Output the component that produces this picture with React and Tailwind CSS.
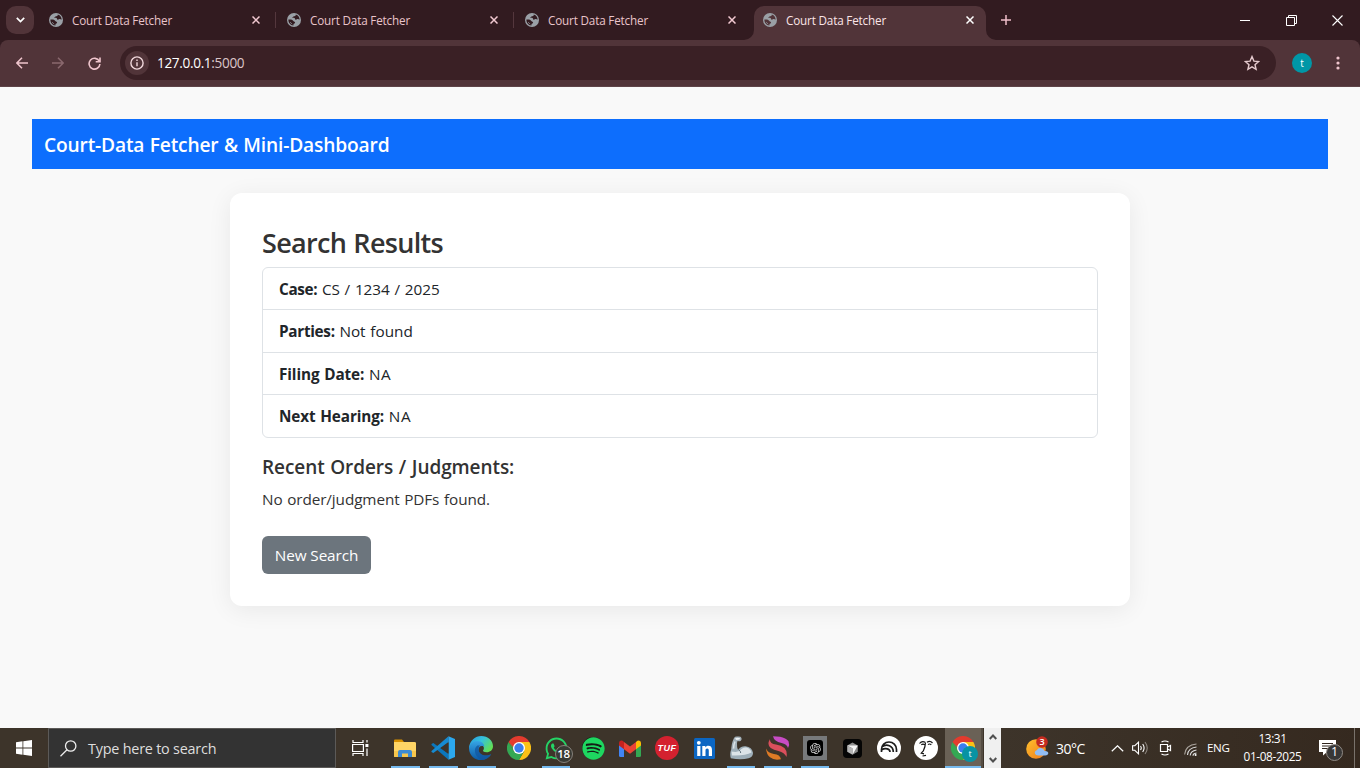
import React from "react";
import { FaWhatsapp, FaSpotify } from "react-icons/fa";
import { RiOpenaiFill } from "react-icons/ri";

const Globe = ({ land = "#321b20" }) => (
  <svg width="14" height="14" viewBox="0 0 14 14" className="shrink-0">
    <circle cx="7" cy="7" r="7" fill="#9aa0a6" />
    <path d="M8.800 1.500C9 3 7.500 3.300 6.400 3.400c-.5.900-1.300.9-1.300 1.500 1.600-.2 2.900 0 3.100 1.300.1.900 1.200.5 1.700.1.800-.5 1.800-.2 2.700.5a5.600 5.600 0 0 0-3.800-5.300z" fill={land} />
    <path d="M1.400 6.600c1.700-.2 3.900-.3 4.700 1.200.3.900 1.800.6 2 1.800-.1 1.200-1.300 1-1.600 1.700-.1.600 0 1-.1 1.300C3.300 12.300 1.300 9.800 1.400 6.600z" fill={land} />
    <path d="M3 9.600c1.200-.3 1.300 1.100 2.200 1.500" stroke="#9aa0a6" strokeWidth=".8" fill="none" />
  </svg>
);

const Close = ({ c = "#f2c9d1" }) => (
  <svg width="8" height="8" viewBox="0 0 8 8" fill="none" stroke={c} strokeWidth="1.500">
    <path d="M.5.5l7 7M7.500.5l-7 7" />
  </svg>
);

const Tab = ({ sep }) => (
  <div className="flex h-[28px] w-[238px] shrink-0 items-center pl-[9px]">
    <Globe />
    <span className="ml-[9px] w-[180px] whitespace-nowrap pt-[2px] text-[#e9c4cb]">Court Data Fetcher</span>
    <Close />
    <span className={sep ? "ml-[15px] h-4 w-px bg-[#54373d]" : "ml-[15px] w-px"} />
  </div>
);

const Chrome = () => (
  <svg width="24" height="24" viewBox="0 0 24 24">
    <path d="M12 6h10.400A12 12 0 0 1 12 24l5.200-9z" fill="#fbc116" />
    <path d="M1.600 6A12 12 0 0 0 12 24l5.200-9H6.800z" fill="#34a853" />
    <path d="M1.600 6A12 12 0 0 1 22.400 6H12L6.800 15z" fill="#e33b2e" />
    <path d="M1.600 6l5.200 9L12 18z" fill="#34a853" />
    <circle cx="12" cy="12" r="6" fill="#fff" />
    <circle cx="12" cy="12" r="4.700" fill="#3b7ded" />
  </svg>
);

const Explorer = () => (
  <svg width="22" height="20" viewBox="0 0 22 20">
    <path d="M0 2.500Q0 1.500 1 1.500h7l2 2.500H0z" fill="#d99100" />
    <path d="M0 4h20.500q1.500 0 1.500 1v13q0 1-1 1H1q-1 0-1-1z" fill="#ffd566" />
    <path d="M0 13h22v5q0 1-1 1H1q-1 0-1-1z" fill="#f6c64d" />
    <path d="M4 19v-5q0-2 2-2h10q2 0 2 2v5h-4v-3.500H8V19z" fill="#3c8bd3" />
  </svg>
);

const VSCode = () => (
  <svg width="24" height="24" viewBox="0 0 24 24">
    <path d="M.5 8 2.300 7 17.500 18v5.800L.5 9z" fill="#0b77bd" />
    <path d="M.5 16 2.300 17 17.500 6V.2L.5 15z" fill="#168bd2" />
    <path d="M17.500.2 24 3.100v17.800l-6.500 2.900z" fill="#2ca8ee" />
    <path d="M17.500 6.500v11L10.200 12z" fill="#3d342a" />
  </svg>
);

const Edge = () => (
  <svg width="24" height="24" viewBox="0 0 24 24">
    <defs>
      <linearGradient id="ea" x1="0" y1="0" x2="1" y2=".6">
        <stop offset="0" stopColor="#2999df" /><stop offset=".5" stopColor="#35c1dc" /><stop offset="1" stopColor="#62df55" />
      </linearGradient>
      <linearGradient id="eb" x1="0" y1="0" x2="0" y2="1">
        <stop offset="0" stopColor="#36a5e5" /><stop offset="1" stopColor="#0c59a4" />
      </linearGradient>
    </defs>
    <path d="M.2 10.500C1.400 4.200 6.200 0 12.200 0 19 0 24 4.600 24 10.300c0 3.800-3 6-6.400 6-3 0-4-1-3.500-1.700 1.600-2 1.200-5.600-3.300-5.800C5.500 8.500.4 9 .2 14z" fill="url(#ea)" />
    <path d="M.1 11.500C1 7 4.600 4.800 8.500 4.900c4.200.1 6.800 2.900 6.800 5.500-5-1.700-6 2.100-5.600 4.300.9 4.300 7 6.500 12.500 3.500C20 22 16.200 24 12 24 5 24-.4 18.500.1 11.500z" fill="url(#eb)" />
    <path d="M8.400 9.400c-4.700 3.100-2.600 12 4.600 14.500 4-.2 7.300-2.300 9.200-5.700-5.500 3-12.100.8-12.600-4.500-.2-2.200.600-3.600 1.600-4.200z" fill="#1056a0" opacity=".75" />
  </svg>
);

const Gmail = () => (
  <svg width="22" height="17" viewBox="0 0 22 17">
    <path d="M0 3h5v14H1.500Q0 17 0 15.500z" fill="#4285f4" />
    <path d="M17 3h5v12.500q0 1.500-1.500 1.500H17z" fill="#34a853" />
    <path d="M17 2q2-2 3.500-1.300Q22 1.200 22 3v2.500l-5 3.800z" fill="#fbbc04" />
    <path d="M5 2Q3 0 1.500.7 0 1.200 0 3v2.500l5 3.800z" fill="#c5221f" />
    <path d="m5 2 6 4.500L17 2v7.300l-6 4.500-6-4.500z" fill="#ea4335" />
  </svg>
);

const Tuf = () => (
  <span className="flex h-6 w-6 items-center justify-center rounded-full bg-[#d4212f] pt-px font-['Liberation_Sans',sans-serif] text-[9px] font-bold italic tracking-[0.5px] text-white">TUF</span>
);

const LinkedIn = () => (
  <svg width="21" height="21" viewBox="0 0 21 21">
    <rect width="21" height="21" rx="1.500" fill="#0b66c3" />
    <circle cx="4.800" cy="4.800" r="1.900" fill="#fff" />
    <path d="M3.200 8h3.200v10H3.200zM8.300 8h3v1.400C12 8.300 13 7.800 14.300 7.800c2.600 0 3.700 1.500 3.700 4.300V18h-3.200v-5.300c0-1.400-.5-2.200-1.600-2.200-1.200 0-1.700.9-1.700 2.200V18H8.300z" fill="#fff" />
  </svg>
);

const Arm = () => (
  <svg width="24" height="24" viewBox="0 0 24 24">
    <path d="M5 2Q6 .3 8.500.6q3-.6 4 1.300.5 2-.9 3-1.300.6-3.100.2L8 7q-.2 4 .8 6.500l-2 3-4.500-1.500Q2 8 5 2z" fill="#a3b0b8" />
    <path d="M6 5.500Q4.500 9 4.500 13" stroke="#dce4e8" strokeWidth="1.500" fill="none" />
    <path d="M2 14Q4 11.500 6.500 13l3 .5q2.500-3.500 7-3.200 6.500.7 7.500 6.500.2 4-4.500 5.500Q12 24 1.800 22.300.5 18 2 14z" fill="#9eafb9" />
    <path d="M2.500 15.500 6.500 16l4-1Q13.500 10.800 17.500 11.500q4.300 1.300 5 5-6 3.500-19.500 3z" fill="#dce4e8" />
    <path d="M6 2.400Q8.500 1 11.200 2.300l-.8 1.300-3 .5z" fill="#eef2f4" />
    <path d="M9.500 13.500q2.300 1.500 2.200 3.500" stroke="#60717b" fill="none" />
  </svg>
);

const Swirl = () => (
  <svg width="24" height="24" viewBox="0 0 24 24">
    <path d="M7 .2Q11 .3 14 .8q6 1 8.500 4.500 1.500 3.500-.5 6.700-1-4-6.500-5Q8 5.500 7 .2z" fill="#c84cc5" />
    <path d="M4 3q-.5 4.500 6 5.500 12.500 2 10.500 12.500-2-4.500-8-6Q-1.500 12.500 4 3z" fill="#d94f5c" />
    <path d="M0 12.500q2 4.500 8 5.500 6 .5 7 5.300-7 1.500-11-2Q.5 18.500 0 12.500z" fill="#dd7a25" />
  </svg>
);

const Gpt = () => (
  <span className="flex h-6 w-6 items-center justify-center bg-[#77797b]">
    <span className="flex h-4 w-4 items-center justify-center rounded-[3px] bg-black text-[13px] text-[#d8d8d8]"><RiOpenaiFill /></span>
  </span>
);

const Cursor = () => (
  <svg width="19" height="19" viewBox="0 0 19 19">
    <rect width="19" height="19" rx="4" fill="#050505" />
    <path d="m9.500 3.500 5.300 3-5.300 2.800-5.300-2.800z" fill="#8f8f8f" />
    <path d="M4.200 6.500 9.500 9.300v6.500l-5.300-3z" fill="#b5b5b5" />
    <path d="M14.800 6.500 9.500 9.300v6.500l5.300-3z" fill="#858585" />
    <path d="M4.200 6.500h10.600L9.500 15.800V9.300z" fill="#f5f5f5" />
  </svg>
);

const Notebook = () => (
  <svg width="24" height="24" viewBox="0 0 24 24" fill="none" stroke="#1c1c1c" strokeWidth="1.700">
    <circle cx="12" cy="12" r="12" fill="#fff" stroke="none" />
    <path d="M4.500 16v-2.500a7.500 7.500 0 0 1 15 0V16M4.800 10.800c5-3.600 11.500-1 11.500 5.200M4.500 14c4-2.600 8.500-1 8.500 2" />
  </svg>
);

const Face = () => (
  <svg width="24" height="24" viewBox="0 0 24 24" fill="none" stroke="#151515" strokeWidth="1.200">
    <circle cx="12" cy="12" r="12" fill="#fff" stroke="none" />
    <path d="M5.500 7.500Q8 4.300 11.200 6.300M13 6.300q3-2.300 5.500.7M7.300 8.800q1.700-1.500 3.500 0M14 8.600q1.500-1.300 3.300.2M11.500 6.500q0 4-2.200 8.500l-2 2.200 2.700.6M8.500 20l3.500-.7" />
  </svg>
);

const Whats = () => (
  <span className="relative text-[25px] text-[#25d366]">
    <FaWhatsapp />
    <span className="absolute left-[11px] top-[9px] flex h-[18px] w-[18px] items-center justify-center rounded-full border border-[#85817b] bg-[#393a34] font-['Open_Sans'] text-[11.5px] font-semibold tracking-[-0.4px] text-white">18</span>
  </span>
);

const Spot = () => (
  <span className="flex h-[22px] w-[22px] items-center justify-center rounded-full bg-[#151b16] text-[23px] text-[#1ed760]"><FaSpotify className="shrink-0" /></span>
);

const apps = [
  [Explorer, 1, 1], [VSCode, 1, 1], [Edge, 1, 1], [Chrome, 0, 1],
  [Whats, 1, 0], [Spot, 0, 0], [Gmail, 0, 0], [Tuf, 0, 0], [LinkedIn, 0, 0], [Arm, 1, 0],
  [Swirl, 1, 0], [Gpt, 1, 0], [Cursor, 0, 0], [Notebook, 0, 0], [Face, 0, 0],
];

const TaskButton = ({ item: [Icon, open, wide] }) => (
  <div className={wide ? "flex h-10 w-[38px] flex-col items-center" : "flex h-10 w-[37px] flex-col items-center pr-px"}>
    <div className="flex h-[38px] items-center pt-[2px]"><Icon /></div>
    <div className={open ? (wide ? "h-[2px] w-[29px] bg-[#76b9ed]" : "h-[2px] w-[28px] bg-[#76b9ed]") : "h-[2px]"} />
  </div>
);

const Taskbar = () => (
  <footer className="flex h-10 items-center bg-[#3d342a] font-['Open_Sans',sans-serif] text-white">
    <div className="flex w-12 items-center justify-center">
      <svg width="16" height="16" viewBox="0 0 16 16" fill="#fff"><path d="M0 2.200 6.500 1.300v6.300H0zM7.300 1.200 16 0v7.600H7.300zM0 8.400h6.500v6.300L0 13.800zM7.300 8.400H16V16l-8.700-1.200z" /></svg>
    </div>
    <div className="flex h-10 w-[288px] items-center border border-[#5c5a58] bg-[#333333] pl-[11px]">
      <svg width="17" height="17" viewBox="0 0 17 17" fill="none" stroke="#eee" strokeWidth="1.300"><circle cx="10.700" cy="6" r="5.200" /><path d="M7 9.700.5 16.200" /></svg>
      <span className="ml-[11px] whitespace-nowrap pt-px text-[14.4px] tracking-[-0.22px] text-[#dedede]">Type here to search</span>
    </div>
    <div className="flex w-[50px] justify-end pr-[17px]">
      <svg width="17" height="16" viewBox="0 0 17 16" fill="none" stroke="#fff" strokeWidth="1.200"><path d="M1 0v2.500h10V0M1 16v-2.500h10V16M.6 4.500h10.800v7H.6zM15 0v2.500M15 8.500V16" /><path d="M13.400 4h3v3h-3z" fill="#fff" stroke="none" /></svg>
    </div>
    <div className="flex">
      {apps.map((a, i) => <TaskButton key={i} item={a} />)}
    </div>
    <div className="flex h-10 w-9 flex-col items-center bg-[#6a6156]">
      <div className="relative flex h-[38px] items-center pt-[2px]">
        <Chrome />
        <span className="absolute left-[11px] top-[18px] flex h-4 w-4 items-center justify-center rounded-full bg-[#0893a3] text-[9px]">t</span>
      </div>
      <div className="h-[2px] w-full bg-[#76b9ed]" />
    </div>
    <div className="h-10 w-[3px] border-r border-[#3d342a] bg-[#554d43]" />
    <div className="flex h-10 w-[17px] flex-col items-center justify-between bg-[#f0f0f0] pb-[5px] pt-[6px]">
      <svg width="8" height="6" viewBox="0 0 8 6" fill="none" stroke="#505050" strokeWidth="2"><path d="m.7 5 3.300-3.500L7.300 5" /></svg>
      <svg width="8" height="6" viewBox="0 0 8 6" fill="none" stroke="#505050" strokeWidth="2"><path d="M.7 1 4 4.500 7.300 1" /></svg>
    </div>
    <div className="flex h-10 flex-1 items-center bg-gradient-to-r from-[#3d342a] to-[#35291f] pl-[25px]">
      <svg width="23" height="24" viewBox="0 0 23 24" className="-mt-[1px] shrink-0">
        <defs><linearGradient id="sun" x2="1" y2="1"><stop stopColor="#ffc02c" /><stop offset="1" stopColor="#ef7c1c" /></linearGradient></defs>
        <circle cx="10" cy="13" r="9.800" fill="url(#sun)" />
        <path d="M10 19q-3-3 1-5 1-2.500 4-2 3 .3 3.500 3 4-.2 3.800 2.500-.5 2-3 2h-7z" fill="#91bdf4" />
        <circle cx="16" cy="6" r="5.800" fill="#c52b20" />
        <text x="16" y="9.200" textAnchor="middle" fill="#fff" fontSize="9" fontWeight="600">3</text>
      </svg>
      <span className="ml-[7px] w-[55px] whitespace-nowrap text-[14px] tracking-[-0.5px]">30°C</span>
      <svg width="13" height="7" viewBox="0 0 13 7" fill="none" stroke="#fff" strokeWidth="1.200" className="shrink-0"><path d="m.8 6.300 5.700-5.500 5.700 5.500" /></svg>
      <svg width="17" height="14" viewBox="0 0 17 14" fill="none" stroke="#fff" strokeWidth="1.100" className="ml-[8px] shrink-0"><path d="M.6 4.700h2.200L6.500 1.200v11.600L2.800 9.300H.6zM8.500 5q1.500 2 0 4M10.700 3q2.800 4 0 8" /><path d="M13 1q4.500 6 0 12" stroke="#8c857e" /></svg>
      <svg width="13" height="16" viewBox="0 0 13 16" fill="none" stroke="#fff" strokeWidth="1.200" className="ml-[10px] shrink-0"><path d="M1.500 4.500h7v7h-7zM8.500 7l3-1.500v5L8.500 9M2.500 2Q6 0 9.500 2M2.500 14q3.500 2 7 0" /></svg>
      <svg width="14" height="13" viewBox="0 0 14 13" fill="none" stroke="#ddd" strokeWidth="1.100" className="ml-[12px] mt-[3px] shrink-0"><path d="M.6 11.500Q1.500 2 12.500 1" stroke="#aaa49d" /><path d="M3.500 12Q4 5 12.500 4M6.200 12.500Q6.500 8 12.500 7M9 12.700Q9 10.500 12.500 10" /><circle cx="11.600" cy="12" r="1" fill="#fff" stroke="none" /></svg>
      <span className="ml-[9px] w-[24px] text-[11.6px] tracking-[-0.35px]">ENG</span>
      <div className="-mt-px ml-[10px] w-[63px] whitespace-nowrap text-center text-[11.8px] leading-[17.500px] tracking-[-0.38px]">
        <div>13:31</div><div>01-08-2025</div>
      </div>
      <div className="relative ml-[15px] h-6 w-6 shrink-0">
        <svg width="17" height="17" viewBox="0 0 17 17" className="mt-[3px]"><path d="M0 1h17v12H8l-4 3.500V13H0z" fill="#fff" /><path d="M3 4.500h11M3 7h11M3 9.500h8" stroke="#30261e" strokeWidth="1" /></svg>
        <span className="absolute left-[7px] top-[8px] flex h-[17px] w-[17px] items-center justify-center rounded-full border border-[#918b86] bg-[#383736] text-[12.5px] font-medium">1</span>
      </div>
      <span className="ml-[11px] h-10 w-px bg-[#79726b]" />
    </div>
  </footer>
);

const rows = [
  ["Case:", "CS / 1234 / 2025", "tracking-[-0.35px]", "tracking-[-0.04px]"],
  ["Parties:", "Not found", "tracking-[-0.3px]", "tracking-[0px]"],
  ["Filing Date:", "NA", "tracking-[-0.1px]", "tracking-[0.6px]"],
  ["Next Hearing:", "NA", "tracking-[-0.1px]", "tracking-[0.6px]"],
];

export default function App() {
  return (
    <div className="flex h-[768px] w-[1360px] flex-col overflow-hidden bg-[#f9f9f9] font-['Open_Sans',sans-serif]">
      <header className="bg-[#321b20] text-[11.7px] tracking-[-0.17px]">
        <div className="flex h-10 items-start pt-[6px]">
          <div className="ml-[6px] flex h-7 w-7 items-center justify-center rounded-[10px] bg-[#513439]">
            <svg width="9" height="6" viewBox="0 0 9 6" fill="none" stroke="#fff" strokeWidth="1.700"><path d="m.8.8 3.700 3.700L8.200.8" /></svg>
          </div>
          <div className="ml-[6px] flex w-[714px]">
            <Tab sep /><Tab sep /><Tab />
          </div>
          <div className="relative flex h-[34px] w-[232px] items-start rounded-t-[10px] bg-[#513439]">
            <svg width="10" height="10" className="absolute -left-[10px] bottom-0"><path d="M10 0v10H0A10 10 0 0 0 10 0" fill="#513439" /></svg>
            <svg width="10" height="10" className="absolute -right-[10px] bottom-0"><path d="M0 0v10h10A10 10 0 0 1 0 0" fill="#513439" /></svg>
            <div className="flex h-7 items-center pl-[9px]">
              <Globe land="#513439" />
              <span className="ml-[9px] w-[180px] whitespace-nowrap pt-[2px] text-[#fbe4e8]">Court Data Fetcher</span>
              <Close c="#fff" />
            </div>
          </div>
          <svg width="10" height="10" viewBox="0 0 10 10" stroke="#efbfc9" strokeWidth="1.500" className="ml-[15px] mt-[9px]"><path d="M5 0v10M0 5h10" /></svg>
          <div className="ml-auto mr-[17px] mt-[8px] flex h-3 items-center gap-[35px]">
            <svg width="11" height="11" stroke="#fff"><path d="M0 5.500h10" /></svg>
            <svg width="11" height="11" fill="none" stroke="#fff"><path d="M.5 2.500h8v8h-8zM2.500 2.500v-2h8v8h-2" /></svg>
            <svg width="11" height="11" stroke="#fff" strokeWidth="1.100"><path d="m.5.5 10 10M10.500.5l-10 10" /></svg>
          </div>
        </div>
        <div className="flex h-[47px] items-center rounded-t-[8px] border-b border-[#5e4448] bg-[#513439]">
          <svg width="12" height="12" viewBox="0 0 12 12" fill="none" stroke="#efc5cd" strokeWidth="1.500" className="ml-4"><path d="M12 6H1M6 .7.9 6 6 11.300" /></svg>
          <svg width="12" height="12" viewBox="0 0 12 12" fill="none" stroke="#8a686e" strokeWidth="1.500" className="ml-6"><path d="M0 6h11M6 .7 11.100 6 6 11.300" /></svg>
          <svg width="13" height="13" viewBox="0 0 13 13" fill="none" stroke="#efc5cd" strokeWidth="1.600" className="ml-6"><path d="M11.300 4.200A5.400 5.400 0 1 0 11.900 7M12 .5v4.300H7.700" /></svg>
          <div className="ml-[19px] flex h-[34px] w-[1156px] items-center rounded-full bg-[#3a2025] pl-[5px]">
            <span className="flex h-6 w-6 items-center justify-center rounded-full bg-[#513439]">
              <svg width="14" height="14" viewBox="0 0 14 14" fill="none" stroke="#f1d8dc" strokeWidth="1.400"><circle cx="7" cy="7" r="6.100" /><path d="M7 6.200v4M7 3.500v1.500" /></svg>
            </span>
            <span className="ml-[8px] text-[13.6px] tracking-[-0.34px] text-white">127.0.0.1<span className="text-[#dcc6c9]">:5000</span></span>
            <svg width="16" height="16" viewBox="0 0 16 16" fill="none" stroke="#e5cace" strokeWidth="1.400" className="ml-auto mr-[16px]"><path d="m8 1.600 1.900 4.500 4.800.4-3.700 3.200 1.100 4.700L8 11.900l-4.100 2.500L5 9.700 1.300 6.500l4.800-.4z" /></svg>
          </div>
          <span className="ml-4 flex h-5 w-5 items-center justify-center rounded-full bg-[#0097a7] text-[10px] text-white">t</span>
          <svg width="4" height="14" viewBox="0 0 4 14" fill="#efc5cd" className="ml-6"><circle cx="2" cy="2" r="1.600" /><circle cx="2" cy="7" r="1.600" /><circle cx="2" cy="12" r="1.600" /></svg>
        </div>
      </header>

      <main className="flex-1 px-8 pt-8">
        <nav className="flex h-[50px] items-center bg-[#0d6efd] px-3 pt-[3px] text-[19.2px] font-semibold tracking-[-0.17px] text-white [word-spacing:0.6px]">
          Court-Data Fetcher &amp; Mini-Dashboard
        </nav>
        <section className="mx-auto mt-6 h-[413px] w-[900px] rounded-xl bg-white p-8 text-[15.3px] leading-[25.600px] tracking-[-0.1px] text-[#333] shadow-[0_4px_24px_rgba(0,0,0,0.07)] [word-spacing:0.8px]">
          <h2 className="mb-[7px] pt-px text-[27px] font-semibold leading-[33.600px] tracking-[-0.68px]">Search Results</h2>
          <ul className="rounded-md border border-[#dee2e6] text-[#212529]">
            {rows.map(([k, v, kc, vc], i) => (
              <li key={k} className={i ? "border-t border-[#dee2e6] px-4 pb-[7px] pt-[9px]" : "px-4 pb-[7px] pt-[9px]"}>
                <strong className={kc}>{k}</strong> <span className={vc}>{v}</span>
              </li>
            ))}
          </ul>
          <h5 className="mb-2 mt-[17px] text-[19px] font-semibold leading-6 tracking-[-0.08px]">Recent Orders / Judgments:</h5>
          <p>No order/judgment PDFs found.</p>
          <button className="mt-[23px] block h-[38px] w-[109px] whitespace-nowrap rounded-md bg-[#6c757d] pt-[2px] text-center tracking-[-0.1px] text-white">New Search</button>
        </section>
      </main>
      <Taskbar />
    </div>
  );
}
